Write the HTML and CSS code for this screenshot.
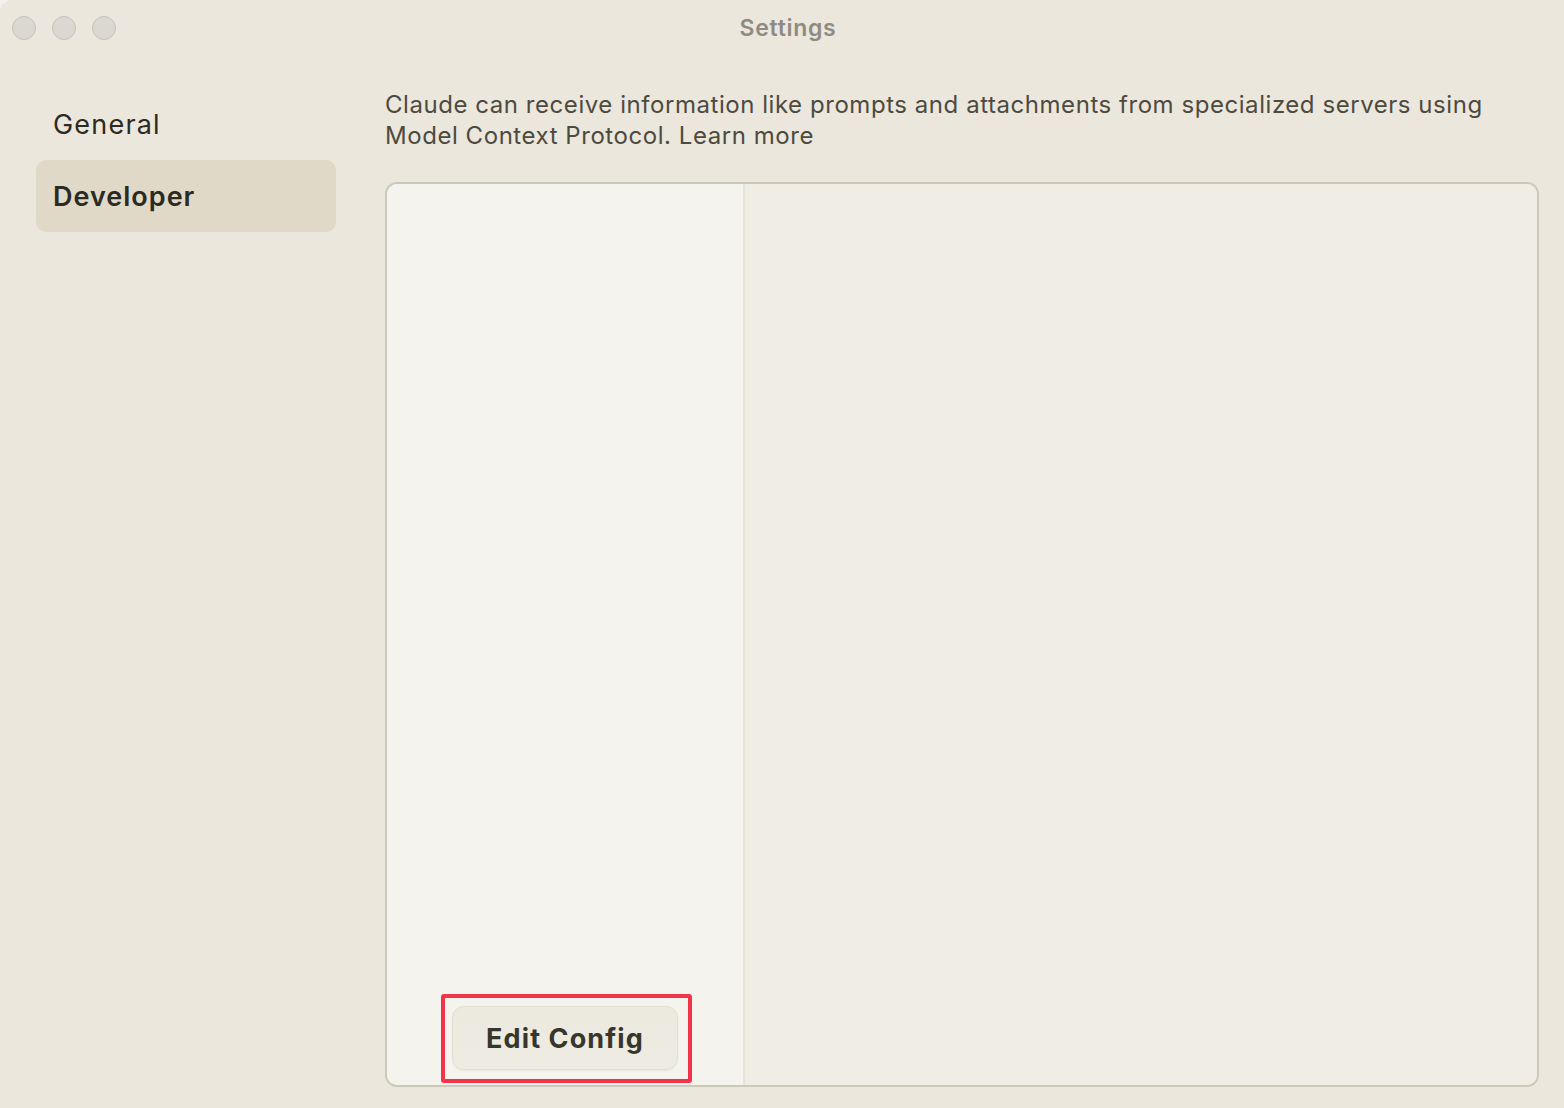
FILE: index.html
```html
<!DOCTYPE html>
<html>
<head>
<meta charset="utf-8">
<link rel="stylesheet" href="styles.css">
</head>
<body>
<div class="window">
  <header class="titlebar">
    <div class="lights">
      <span class="light"></span>
      <span class="light"></span>
      <span class="light"></span>
    </div>
    <div class="title">Settings</div>
  </header>
  <div class="body">
    <nav class="sidebar">
      <div class="nav-item">General</div>
      <div class="nav-item active">Developer</div>
    </nav>
    <main class="content">
      <p class="desc">Claude can receive information like prompts and attachments from specialized servers using Model Context Protocol. Learn more</p>
      <div class="panel">
        <div class="panel-left">
          <div class="highlight">
            <button class="btn">Edit Config</button>
          </div>
        </div>
        <div class="panel-right"></div>
      </div>
    </main>
  </div>
</div>
</body>
</html>
```

FILE: styles.css
```css
* { box-sizing: border-box; }
html, body { margin: 0; padding: 0; }
body {
  background: #f3f1ec;
  font-family: "Inter", "Liberation Sans", sans-serif;
  width: 1564px;
  height: 1108px;
  overflow: hidden;
}
.window {
  width: 1564px;
  height: 1108px;
  background: #ebe7dc;
  border-top-left-radius: 12px;
  display: flex;
  flex-direction: column;
}
.titlebar {
  height: 56px;
  position: relative;
  display: flex;
  align-items: center;
  justify-content: center;
  flex-shrink: 0;
}
.lights {
  position: absolute;
  left: 12px;
  top: 16px;
  display: flex;
  gap: 16px;
}
.light {
  width: 24px;
  height: 24px;
  border-radius: 50%;
  background: #dad8d1;
  border: 1px solid #c4c2bb;
}
.title {
  font-size: 23px;
  font-weight: 600;
  color: #8e8b83;
  letter-spacing: 0.7px;
  margin-left: 12px;
}
.body {
  flex: 1;
  display: flex;
  padding: 0 25px 21px 36px;
}
.sidebar {
  width: 300px;
  flex-shrink: 0;
  display: flex;
  flex-direction: column;
  padding-top: 32px;
}
.nav-item {
  height: 72px;
  display: flex;
  align-items: center;
  padding-left: 17px;
  font-size: 27px;
  color: #2c2a22;
  letter-spacing: 1.2px;
  border-radius: 10px;
}
.active {
  background: #e0d9c8;
  font-weight: 600;
  letter-spacing: 1px;
}
.content {
  flex: 1;
  margin-left: 49px;
  display: flex;
  flex-direction: column;
}
.desc {
  margin: 33px 0 0 0;
  font-size: 24px;
  line-height: 31px;
  color: #4d4a40;
  letter-spacing: 0.55px;
  height: 93px;
}
.panel {
  flex: 1;
  border: 2px solid #cdc9b9;
  border-radius: 12px;
  display: flex;
  overflow: hidden;
}
.panel-left {
  width: 358px;
  background: #f4f3ee;
  border-right: 2px solid #e7e4dc;
  display: flex;
  flex-direction: column;
  justify-content: flex-end;
  align-items: center;
  padding-bottom: 2px;
}
.panel-right {
  flex: 1;
  background: #f0ede5;
}
.highlight {
  border: 4px solid #f2344a;
  border-radius: 3px;
  padding: 8px 10px 9px 7px;
  margin-left: 3px;
}
.btn {
  display: block;
  width: 226px;
  height: 64px;
  border-radius: 12px;
  border: 1px solid #e2decf;
  background: linear-gradient(#ece9df, #eeebe2);
  font-family: "Inter", "Liberation Sans", sans-serif;
  font-size: 27px;
  font-weight: 700;
  color: #38352b;
  letter-spacing: 1.1px;
  box-shadow: 0 1px 2px rgba(0,0,0,0.06);
}
```
